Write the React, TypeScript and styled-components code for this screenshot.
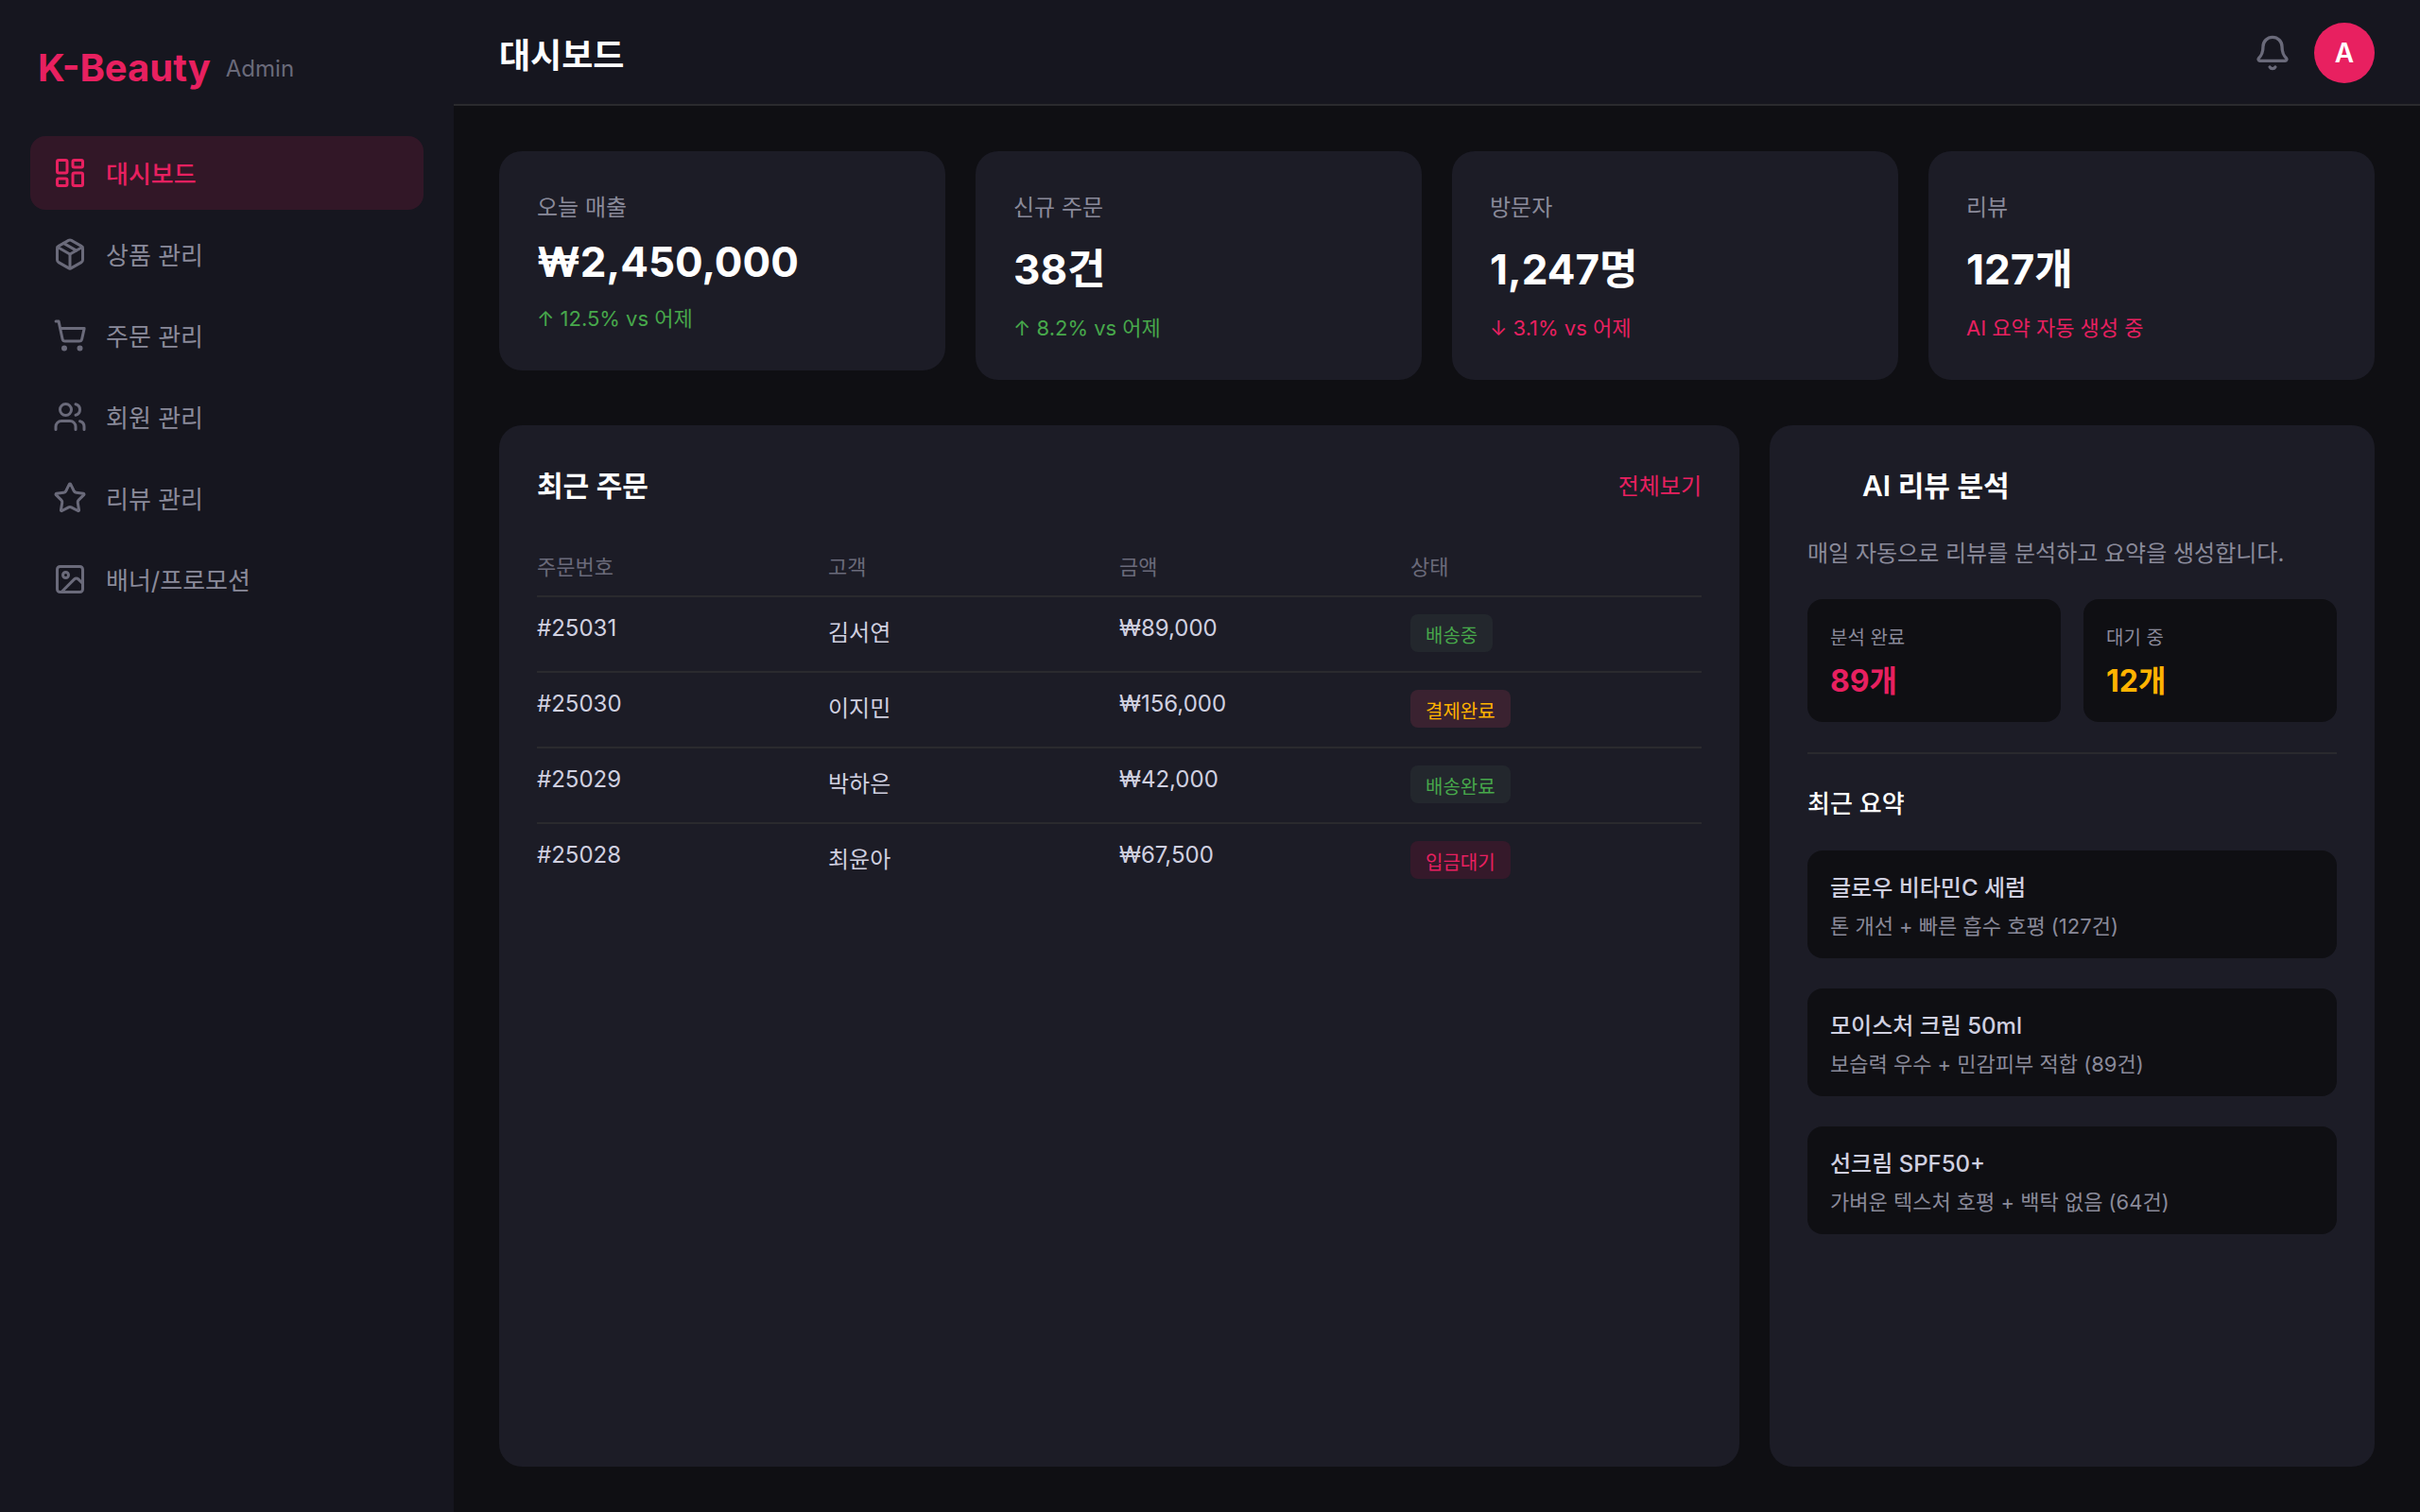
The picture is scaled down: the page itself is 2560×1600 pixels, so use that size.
import React from 'react';
import styled, { createGlobalStyle } from 'styled-components';
import {
  Bell,
  Image as ImageIcon,
  LayoutDashboard,
  LucideIcon,
  Package,
  ShoppingCart,
  Star,
  Users,
} from 'lucide-react';

const color = {
  page: '#0f0f13',
  bar: '#16161f',
  card: '#1c1c26',
  line: '#2a2a2e',
  pink: '#e82060',
  green: '#47a84b',
  amber: '#ffb300',
  white: '#ffffff',
  text: '#d0d0e0',
  muted: '#8a8a9a',
  faint: '#6a6a7a',
};

const GlobalStyle = createGlobalStyle`
  *, *::before, *::after { box-sizing: border-box; }
  body {
    margin: 0;
    background: ${color.page};
    color: ${color.white};
    font-family: Inter, "Noto Sans CJK KR", sans-serif;
    font-size: 24px;
  }
  h1, h2, h3, p, ul { margin: 0; padding: 0; }
  ul { list-style: none; }
  a { color: inherit; text-decoration: none; }
`;

const Shell = styled.div`
  display: flex;
  min-height: 100vh;
`;

const Sidebar = styled.aside`
  flex: 0 0 480px;
  display: flex;
  flex-direction: column;
  gap: 32px;
  padding: 32px;
  background: ${color.bar};
`;

const Brand = styled.div`
  display: flex;
  align-items: center;
  gap: 16px;
  padding: 16px 8px;
`;

const BrandName = styled.span`
  font-size: 40px;
  line-height: 48px;
  font-weight: 700;
  color: ${color.pink};
`;

const BrandRole = styled.span`
  color: ${color.faint};
`;

const NavList = styled.ul`
  display: flex;
  flex-direction: column;
  gap: 8px;
`;

const NavLink = styled.a<{ $active?: boolean }>`
  display: flex;
  align-items: center;
  gap: 20px;
  padding: 20px 24px 21px;
  border-radius: 16px;
  font-size: 26px;
  font-weight: ${(p) => (p.$active ? 500 : 400)};
  color: ${(p) => (p.$active ? color.pink : color.muted)};
  background: ${(p) => (p.$active ? '#e8206022' : 'transparent')};

  svg {
    color: ${(p) => (p.$active ? color.pink : color.faint)};
  }
`;

const Main = styled.div`
  flex: 1;
  min-width: 0;
  display: flex;
  flex-direction: column;
`;

const Header = styled.header`
  display: flex;
  align-items: center;
  justify-content: space-between;
  padding: 24px 48px;
  background: ${color.bar};
  box-shadow: inset 0 -2px ${color.line};
`;

const PageTitle = styled.h1`
  font-size: 36px;
  font-weight: 600;
`;

const HeaderActions = styled.div`
  display: flex;
  align-items: center;
  gap: 24px;
`;

const IconButton = styled.button`
  display: flex;
  padding: 0;
  border: 0;
  background: none;
  color: ${color.faint};
  cursor: pointer;
`;

const Avatar = styled.button`
  width: 64px;
  height: 64px;
  padding: 0;
  border: 0;
  border-radius: 50%;
  background: ${color.pink};
  color: ${color.white};
  font: inherit;
  font-size: 28px;
  font-weight: 600;
  cursor: pointer;
`;

const Content = styled.main`
  flex: 1;
  display: flex;
  flex-direction: column;
  gap: 48px;
  padding: 48px;
`;

const StatGrid = styled.section`
  display: grid;
  grid-template-columns: repeat(4, 1fr);
  align-items: start;
  gap: 32px;
`;

const StatCard = styled.article`
  display: flex;
  flex-direction: column;
  gap: 15px;
  padding: 40px 40px 41px;
  border-radius: 24px;
  background: ${color.card};
`;

const StatLabel = styled.h2`
  font-size: 24px;
  font-weight: 400;
  color: ${color.muted};
`;

const StatValue = styled.p`
  font-size: 44px;
  font-weight: 700;
`;

const StatNote = styled.p<{ $tone: string }>`
  font-size: 22px;
  color: ${(p) => p.$tone};
`;

const Panels = styled.div`
  flex: 1;
  display: grid;
  grid-template-columns: minmax(0, 1fr) 640px;
  gap: 32px;
`;

const Panel = styled.section`
  display: flex;
  flex-direction: column;
  gap: 32px;
  padding: 40px;
  border-radius: 24px;
  background: ${color.card};
`;

const PanelHead = styled.div<{ $spread?: boolean }>`
  display: flex;
  align-items: center;
  justify-content: ${(p) => (p.$spread ? 'space-between' : 'flex-start')};
  gap: 16px;
`;

const PanelTitle = styled.h2`
  font-size: 30px;
  font-weight: 600;
`;

const MoreLink = styled.a`
  color: ${color.pink};
`;

const IconSlot = styled.span`
  width: 42px;
`;

const Table = styled.table`
  width: 100%;
  table-layout: fixed;
  border-spacing: 0;
  text-align: left;
`;

const HeadCell = styled.th`
  padding: 16px 0;
  font-size: 22px;
  font-weight: 400;
  color: ${color.faint};
`;

const Cell = styled.td`
  padding: 18px 0 20px;
  border-top: 2px solid ${color.line};
  vertical-align: top;
  color: ${color.text};
`;

const Badge = styled.span<{ $tone: string }>`
  display: block;
  width: fit-content;
  padding: 7px 16px 4px;
  border-radius: 8px;
  font-size: 20px;
  color: ${(p) => p.$tone};
`;

const ShippedBadge = styled(Badge)`
  background: #23272d;
`;

const PaidBadge = styled(Badge)`
  background: #3a2230;
`;

const WaitingBadge = styled(Badge)`
  background: #35192a;
`;

const Description = styled.p`
  padding-bottom: 1px;
  color: ${color.muted};
`;

const TileRow = styled.div`
  display: grid;
  grid-template-columns: 1fr 1fr;
  gap: 24px;
`;

const Tile = styled.div`
  display: flex;
  flex-direction: column;
  gap: 7px;
  padding: 25px 24px 23px;
  border-radius: 16px;
  background: ${color.page};
`;

const TileLabel = styled.span`
  font-size: 20px;
  color: ${color.muted};
`;

const TileValue = styled.strong<{ $tone: string }>`
  font-size: 32px;
  font-weight: 700;
  color: ${(p) => p.$tone};
`;

const Divider = styled.hr`
  width: 100%;
  height: 2px;
  margin: 0;
  border: 0;
  background: ${color.line};
`;

const SubTitle = styled.h3`
  && { padding-bottom: 1px; }
  font-size: 26px;
  font-weight: 500;
`;

const SummaryList = styled.ul`
  display: flex;
  flex-direction: column;
  gap: 32px;
`;

const SummaryItem = styled.li`
  display: flex;
  flex-direction: column;
  gap: 7px;
  padding: 20px 24px;
  border-radius: 16px;
  background: ${color.page};
`;

const SummaryName = styled.span`
  font-weight: 500;
  color: ${color.text};
`;

const SummaryText = styled.span`
  font-size: 22px;
  color: ${color.muted};
`;

const navItems: { label: string; icon: LucideIcon }[] = [
  { label: '대시보드', icon: LayoutDashboard },
  { label: '상품 관리', icon: Package },
  { label: '주문 관리', icon: ShoppingCart },
  { label: '회원 관리', icon: Users },
  { label: '리뷰 관리', icon: Star },
  { label: '배너/프로모션', icon: ImageIcon },
];

const stats = [
  { label: '오늘 매출', value: '₩2,450,000', note: '↑ 12.5% vs 어제', tone: color.green },
  { label: '신규 주문', value: '38건', note: '↑ 8.2% vs 어제', tone: color.green },
  { label: '방문자', value: '1,247명', note: '↓ 3.1% vs 어제', tone: color.pink },
  { label: '리뷰', value: '127개', note: 'AI 요약 자동 생성 중', tone: color.pink },
];

const orders = [
  { id: '#25031', name: '김서연', price: '₩89,000', status: '배송중', StatusBadge: ShippedBadge, tone: color.green },
  { id: '#25030', name: '이지민', price: '₩156,000', status: '결제완료', StatusBadge: PaidBadge, tone: color.amber },
  { id: '#25029', name: '박하은', price: '₩42,000', status: '배송완료', StatusBadge: ShippedBadge, tone: color.green },
  { id: '#25028', name: '최윤아', price: '₩67,500', status: '입금대기', StatusBadge: WaitingBadge, tone: color.pink },
];

const summaries = [
  { name: '글로우 비타민C 세럼', text: '톤 개선 + 빠른 흡수 호평 (127건)' },
  { name: '모이스처 크림 50ml', text: '보습력 우수 + 민감피부 적합 (89건)' },
  { name: '선크림 SPF50+', text: '가벼운 텍스처 호평 + 백탁 없음 (64건)' },
];

export default function App() {
  return (
    <>
      <GlobalStyle />
      <Shell>
        <Sidebar>
          <Brand>
            <BrandName>K-Beauty</BrandName>
            <BrandRole>Admin</BrandRole>
          </Brand>
          <nav>
            <NavList>
              {navItems.map(({ label, icon: Icon }, i) => (
                <li key={label}>
                  <NavLink href="#" $active={i === 0} aria-current={i === 0 ? 'page' : undefined}>
                    <Icon size={36} />
                    {label}
                  </NavLink>
                </li>
              ))}
            </NavList>
          </nav>
        </Sidebar>
        <Main>
          <Header>
            <PageTitle>대시보드</PageTitle>
            <HeaderActions>
              <IconButton type="button" aria-label="알림">
                <Bell size={40} />
              </IconButton>
              <Avatar type="button">A</Avatar>
            </HeaderActions>
          </Header>
          <Content>
            <StatGrid>
              {stats.map((s) => (
                <StatCard key={s.label}>
                  <StatLabel>{s.label}</StatLabel>
                  <StatValue>{s.value}</StatValue>
                  <StatNote $tone={s.tone}>{s.note}</StatNote>
                </StatCard>
              ))}
            </StatGrid>
            <Panels>
              <Panel>
                <PanelHead $spread>
                  <PanelTitle>최근 주문</PanelTitle>
                  <MoreLink href="#">전체보기</MoreLink>
                </PanelHead>
                <Table>
                  <thead>
                    <tr>
                      <HeadCell scope="col">주문번호</HeadCell>
                      <HeadCell scope="col">고객</HeadCell>
                      <HeadCell scope="col">금액</HeadCell>
                      <HeadCell scope="col">상태</HeadCell>
                    </tr>
                  </thead>
                  <tbody>
                    {orders.map(({ id, name, price, status, StatusBadge, tone }) => (
                      <tr key={id}>
                        <Cell>{id}</Cell>
                        <Cell>{name}</Cell>
                        <Cell>{price}</Cell>
                        <Cell>
                          <StatusBadge $tone={tone}>{status}</StatusBadge>
                        </Cell>
                      </tr>
                    ))}
                  </tbody>
                </Table>
              </Panel>
              <Panel>
                <PanelHead>
                  <IconSlot aria-hidden="true" />
                  <PanelTitle>AI 리뷰 분석</PanelTitle>
                </PanelHead>
                <Description>매일 자동으로 리뷰를 분석하고 요약을 생성합니다.</Description>
                <TileRow>
                  <Tile>
                    <TileLabel>분석 완료</TileLabel>
                    <TileValue $tone={color.pink}>89개</TileValue>
                  </Tile>
                  <Tile>
                    <TileLabel>대기 중</TileLabel>
                    <TileValue $tone={color.amber}>12개</TileValue>
                  </Tile>
                </TileRow>
                <Divider />
                <SubTitle>최근 요약</SubTitle>
                <SummaryList>
                  {summaries.map((s) => (
                    <SummaryItem key={s.name}>
                      <SummaryName>{s.name}</SummaryName>
                      <SummaryText>{s.text}</SummaryText>
                    </SummaryItem>
                  ))}
                </SummaryList>
              </Panel>
            </Panels>
          </Content>
        </Main>
      </Shell>
    </>
  );
}
